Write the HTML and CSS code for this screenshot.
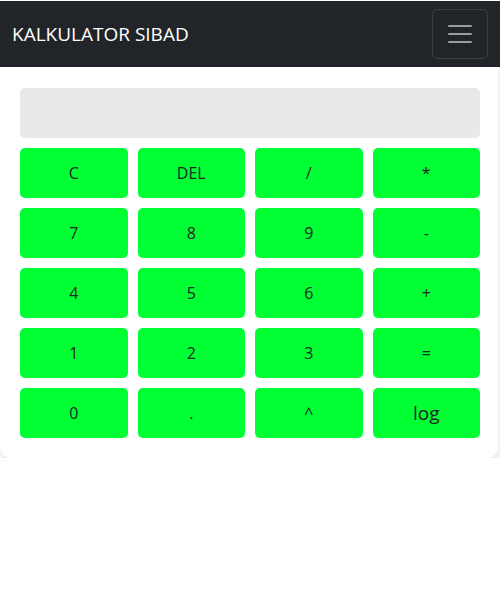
FILE: index.html
```html
<!DOCTYPE html>
<html>
<head>
<meta charset="utf-8">
<link rel="stylesheet" href="styles.css">
</head>
<body>
<nav class="navbar">
  <span class="brand">KALKULATOR SIBAD</span>
  <button class="toggler" aria-label="menu">
    <svg width="30" height="30" viewBox="0 0 30 30"><path d="M4 7h22M4 15h22M4 23h22" stroke="rgba(255,255,255,0.55)" stroke-width="2" stroke-linecap="round"/></svg>
  </button>
</nav>
<div class="card">
  <div class="display"></div>
  <div class="keys">
    <button class="key">C</button>
    <button class="key">DEL</button>
    <button class="key">/</button>
    <button class="key">*</button>
    <button class="key">7</button>
    <button class="key">8</button>
    <button class="key">9</button>
    <button class="key">-</button>
    <button class="key">4</button>
    <button class="key">5</button>
    <button class="key">6</button>
    <button class="key">+</button>
    <button class="key">1</button>
    <button class="key">2</button>
    <button class="key">3</button>
    <button class="key">=</button>
    <button class="key">0</button>
    <button class="key">.</button>
    <button class="key">^</button>
    <button class="key key-log">log</button>
  </div>
</div>
</body>
</html>
```
FILE: styles.css
```css
html, body {
  margin: 0;
  padding: 0;
  background: #fff;
  font-family: "Open Sans", "Noto Sans", sans-serif;
}
.navbar {
  margin-top: 1px;
  height: 66px;
  background: #212529;
  display: flex;
  align-items: center;
  justify-content: space-between;
  padding: 0 12px;
  box-sizing: border-box;
}
.brand {
  color: #fff;
  font-size: 19px;
}
.toggler {
  width: 56px;
  height: 50px;
  background: transparent;
  border: 1px solid rgba(255,255,255,0.12);
  border-radius: 6px;
  display: flex;
  align-items: center;
  justify-content: center;
  padding: 0;
}
.card {
  width: 498px;
  box-sizing: border-box;
  padding: 21px 18px 20px 20px;
  background: #fff;
  border-radius: 0 0 10px 10px;
  box-shadow: 0 3px 10px rgba(0,0,0,0.14);
}
.display {
  height: 50px;
  background: #e9e9e9;
  border-radius: 5px;
  margin-bottom: 10px;
}
.keys {
  display: grid;
  grid-template-columns: repeat(4, 1fr);
  gap: 10px;
}
.key {
  height: 50px;
  border: none;
  border-radius: 5px;
  background: #00ff33;
  color: #212529;
  font-family: "Open Sans", "Noto Sans", sans-serif;
  font-size: 16px;
  padding: 0;
}
.key-log {
  font-size: 19px;
}
```
